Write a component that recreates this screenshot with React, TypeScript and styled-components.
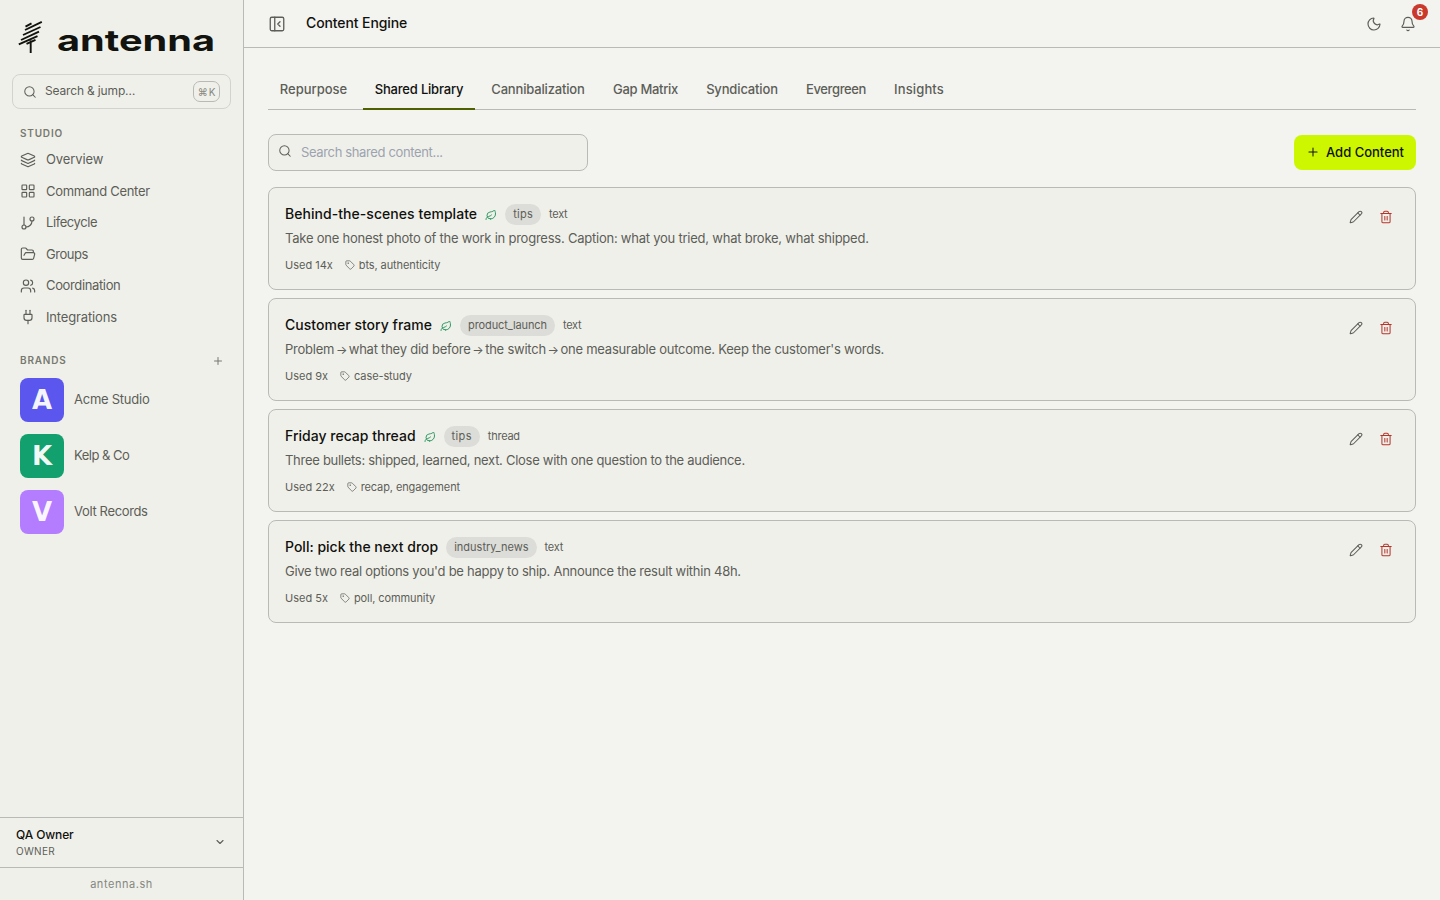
import React from "react";
import styled, { createGlobalStyle } from "styled-components";
import {
  Layers, LayoutGrid, GitBranch, FolderOpen, Users, Plug, Search, Plus, ChevronDown,
  PanelLeftClose, Moon, Bell, Leaf, Tag, Pencil, Trash2,
} from "lucide-react";

const Global = createGlobalStyle`
  *, *::before, *::after { box-sizing: border-box; }
  body { margin: 0; background: #f3f3f0; color: #10110d; font: 400 13px/1.5 Inter, "Liberation Sans", sans-serif; }
  button, input { font: inherit; color: inherit; }
  button { border: 0; padding: 0; background: none; }
  svg { flex: none; display: block; }
`;

/* Single-line label with adjustable tracking */
const Fit = styled.span<{ $ls?: number }>`
  letter-spacing: ${(p) => p.$ls ?? 0}px;
  white-space: nowrap;
`;

const Shell = styled.div`
  display: flex;
  height: 900px;
`;
const Sidebar = styled.aside`
  width: 244px;
  flex: none;
  display: flex;
  flex-direction: column;
  background: #f0f0eb;
  border-right: 1px solid #b9bab6;
`;
const Brand = styled.div`
  height: 74px;
  padding: 16px 0 0 16px;
`;
const JumpBox = styled.button`
  display: flex;
  align-items: center;
  height: 35px;
  margin: 0 12px;
  padding: 0 10px;
  gap: 8px;
  border: 1px solid #d2d3cf;
  border-radius: 8px;
  color: #5c5e57;
  text-align: left;
  font-size: 12px;
`;
const JumpLabel = styled(Fit)`
  flex: 1;
  padding-bottom: 2px;
`;
const Kbd = styled.kbd`
  height: 21px;
  width: 27px;
  display: flex;
  align-items: center;
  justify-content: center;
  gap: 1px;
  border: 1px solid #b9bab6;
  border-radius: 7px;
  font: 400 10px/1 Inter, "DejaVu Sans", sans-serif;
  color: #85877f;
  white-space: nowrap;
`;
const SectionHead = styled.div<{ $top: number; $line: number }>`
  display: flex;
  align-items: center;
  justify-content: space-between;
  height: 15px;
  margin: ${(p) => p.$top}px 19px 0 20px;
  font-size: 10px;
  line-height: ${(p) => p.$line}px;
  font-weight: 600;
  letter-spacing: 0.8px;
  color: #77796f;
`;
const NavList = styled.nav`
  display: flex;
  flex-direction: column;
  padding: 4px 20px 0;
`;
const NavItem = styled.a`
  display: flex;
  align-items: center;
  gap: 10px;
  height: 31.5px;
  color: #5c5e57;
`;
const BrandList = styled.div`
  display: flex;
  flex-direction: column;
  gap: 12px;
  padding: 10px 20px 0;
`;
const BrandRow = styled.a`
  display: flex;
  align-items: center;
  gap: 10px;
  color: #5c5e57;
`;
const Avatar = styled.span<{ $bg: string }>`
  width: 44px;
  height: 44px;
  border-radius: 8px;
  display: grid;
  place-items: center;
  background: ${(p) => p.$bg};
  color: rgba(255, 255, 255, 0.94);
  font: 700 26px/1 "DejaVu Sans", sans-serif;
`;
const Account = styled.button`
  margin-top: auto;
  height: 50px;
  border-top: 1px solid #b9bab6;
  padding: 0 17px 0 16px;
  display: flex;
  align-items: center;
  justify-content: space-between;
  text-align: left;
  color: #5c5e57;
  svg { margin-bottom: 1px; }
`;
const AccountName = styled.div`
  font-size: 12px;
  line-height: 18px;
  font-weight: 450;
  letter-spacing: -0.12px;
  color: #10110d;
`;
const AccountRole = styled.div`
  font-size: 10px;
  line-height: 15px;
  letter-spacing: 0.3px;
`;
const Footer = styled.div`
  height: 33px;
  border-top: 1px solid #b9bab6;
  display: grid;
  place-items: center;
  font-size: 11px;
  letter-spacing: 0.55px;
  color: #85877f;
`;
const Main = styled.main`
  flex: 1;
  min-width: 0;
`;
const TopBar = styled.header`
  height: 48px;
  border-bottom: 1px solid #b9bab6;
  display: flex;
  align-items: center;
  padding: 0 24px;
  color: #5c5e57;
`;
const PageTitle = styled.h1`
  margin: 0 auto 0 20px;
  padding-bottom: 1px;
  font-size: 14px;
  line-height: 20px;
  font-weight: 500;
  letter-spacing: -0.1px;
  color: #10110d;
`;
const BellWrap = styled.span`
  position: relative;
  margin-left: 18px;
`;
const Count = styled.span`
  position: absolute;
  right: -12px;
  top: -12px;
  width: 16px;
  height: 16px;
  border-radius: 50%;
  display: grid;
  place-items: center;
  background: #c93a2c;
  color: #fff;
  font-size: 10px;
  line-height: 1;
  font-weight: 700;
`;
const Content = styled.div`
  padding: 22px 24px;
`;
const Tabs = styled.div`
  display: flex;
  gap: 4px;
  height: 40px;
  border-bottom: 1px solid #b9bab6;
`;
const Tab = styled.button<{ $active?: boolean; $w: number }>`
  width: ${(p) => p.$w}px;
  height: 40px;
  padding-top: 2px;
  border-bottom: 2px solid ${(p) => (p.$active ? "#4d6100" : "transparent")};
  font-weight: 500;
  color: ${(p) => (p.$active ? "#10110d" : "#5c5e57")};
`;
const Toolbar = styled.div`
  display: flex;
  align-items: center;
  justify-content: space-between;
  margin: 24px 0 16px;
  height: 37px;
`;
const Field = styled.label`
  width: 320px;
  height: 37px;
  border: 1px solid #b9bab6;
  border-radius: 8px;
  background: #f0f0eb;
  display: flex;
  gap: 9px;
  padding: 0 9px;
  color: #5c5e57;
  svg { margin-top: 9px; }
`;
const Input = styled.input`
  flex: 1;
  border: 0;
  padding: 0;
  outline: 0;
  background: none;
  letter-spacing: -0.36px;
  &::placeholder { color: #9ca3af; opacity: 1; }
`;
const AddButton = styled.button`
  width: 122px;
  height: 35px;
  border-radius: 8px;
  background: #cdf700;
  display: flex;
  align-items: center;
  padding-left: 12px;
  gap: 6px;
  font-weight: 500;
  svg { margin-bottom: 1px; }
`;
const CardList = styled.div`
  display: flex;
  flex-direction: column;
  gap: 8px;
`;
const Card = styled.article`
  height: 103px;
  border: 1px solid #b9bab6;
  border-radius: 8px;
  background: #f0f0eb;
  padding: 16px;
  display: flex;
  justify-content: space-between;
  color: #5c5e57;
`;
const TitleRow = styled.div`
  display: flex;
  align-items: center;
  height: 21px;
  gap: 8px;
  font-size: 11px;
`;
const Title = styled.h2<{ $ls: number }>`
  margin: 0;
  padding-bottom: 2px;
  font-size: 14px;
  line-height: 19px;
  font-weight: 500;
  letter-spacing: ${(p) => p.$ls}px;
  color: #10110d;
`;
const Pill = styled.span<{ $ls: number }>`
  height: 21px;
  padding: 0 8px;
  border-radius: 11px;
  line-height: 21px;
  letter-spacing: ${(p) => p.$ls}px;
  background: #dcdcd8;
`;
const Kind = styled(Fit)`
  line-height: 17px;
`;
const Desc = styled.p<{ $ls: number }>`
  margin: 4px 0 8px;
  height: 19.5px;
  line-height: 19.5px;
  letter-spacing: ${(p) => p.$ls}px;
`;
const Arrow = styled.span`
  margin: 0 -1.8px;
  font-size: 12px;
`;
const Meta = styled.div`
  display: flex;
  align-items: center;
  gap: 12px;
  font-size: 11px;
  line-height: 16.5px;
`;
const Tags = styled.span`
  display: flex;
  align-items: center;
  gap: 4px;
  letter-spacing: -0.1px;
`;
const Actions = styled.div`
  display: flex;
  gap: 16px;
  padding: 6px 6px 0 0;
  svg:last-child { color: #b5352b; }
`;

const nav = [
  { icon: Layers, label: "Overview", ls: -0.12 },
  { icon: LayoutGrid, label: "Command Center", ls: -0.3 },
  { icon: GitBranch, label: "Lifecycle", ls: -0.42 },
  { icon: FolderOpen, label: "Groups", ls: -0.46 },
  { icon: Users, label: "Coordination", ls: -0.36 },
  { icon: Plug, label: "Integrations", ls: -0.15 },
];
const brands = [
  { letter: "A", name: "Acme Studio", bg: "#5b57ee", ls: -0.25 },
  { letter: "K", name: "Kelp & Co", bg: "#12a06e", ls: -0.5 },
  { letter: "V", name: "Volt Records", bg: "#b47dff", ls: -0.35 },
];
const tabs = [
  { label: "Repurpose", w: 91, ls: 0 },
  { label: "Shared Library", w: 112, ls: -0.2 },
  { label: "Cannibalization", w: 118, ls: -0.17 },
  { label: "Gap Matrix", w: 89, ls: -0.3 },
  { label: "Syndication", w: 96, ls: -0.15 },
  { label: "Evergreen", w: 84, ls: -0.4 },
  { label: "Insights", w: 74, ls: 0.12 },
];
const cards = [
  { title: "Behind-the-scenes template", tls: 0.05, leaf: true, pill: "tips", pls: 0.25, kind: "text", used: "Used 14x", tags: "bts, authenticity",
    desc: "Take one honest photo of the work in progress. Caption: what you tried, what broke, what shipped.", dls: -0.233 },
  { title: "Customer story frame", tls: 0.03, leaf: true, pill: "product_launch", pls: -0.11, kind: "text", used: "Used 9x", tags: "case-study",
    desc: "Problem → what they did before → the switch → one measurable outcome. Keep the customer's words.", dls: -0.23 },
  { title: "Friday recap thread", tls: 0.01, leaf: true, pill: "tips", pls: 0.35, kind: "thread", used: "Used 22x", tags: "recap, engagement",
    desc: "Three bullets: shipped, learned, next. Close with one question to the audience.", dls: -0.28 },
  { title: "Poll: pick the next drop", tls: 0, leaf: false, pill: "industry_news", pls: 0, kind: "text", used: "Used 5x", tags: "poll, community",
    desc: "Give two real options you'd be happy to ship. Announce the result within 48h.", dls: -0.26 },
];

function Logo() {
  return (
    <svg width="210" height="48" viewBox="0 -4 210 48" overflow="visible" role="img" aria-label="antenna">
      <g stroke="#12130e" strokeWidth="1.9" fill="none">
        <path d="M9.500 6.600 15.500 3.400M9 10 25.800 1.800M7 15 24.500 7M5 20 23 11.700M2.800 24.300 21.500 16.200M10.500 23.800 19.500 19.800M14.700 20.500v12.500" />
      </g>
      <text x="41" y="30.800" textLength="158" lengthAdjust="spacingAndGlyphs" fontFamily="Inter" fontWeight="650" fontSize="29.500" fill="#12130e">antenna</text>
    </svg>
  );
}

export default function App() {
  return (
    <Shell>
      <Global />
      <Sidebar>
        <Brand><Logo /></Brand>
        <JumpBox>
          <Search size={14} strokeWidth={1.75} />
          <JumpLabel $ls={-0.16}>Search &amp; jump…</JumpLabel>
          <Kbd><span>⌘</span><span>K</span></Kbd>
        </JumpBox>
        <SectionHead $top={16} $line={16}>STUDIO</SectionHead>
        <NavList>
          {nav.map(({ icon: Icon, label, ls }) => (
            <NavItem key={label}><Icon size={16} strokeWidth={1.75} /><Fit $ls={ls}>{label}</Fit></NavItem>
          ))}
        </NavList>
        <SectionHead $top={20} $line={15}>BRANDS<Plus size={12} strokeWidth={2} /></SectionHead>
        <BrandList>
          {brands.map((b) => (
            <BrandRow key={b.name}><Avatar $bg={b.bg}>{b.letter}</Avatar><Fit $ls={b.ls}>{b.name}</Fit></BrandRow>
          ))}
        </BrandList>
        <Account>
          <div>
            <AccountName>QA Owner</AccountName>
            <AccountRole>OWNER</AccountRole>
          </div>
          <ChevronDown size={12} strokeWidth={2.25} />
        </Account>
        <Footer>antenna.sh</Footer>
      </Sidebar>
      <Main>
        <TopBar>
          <PanelLeftClose size={18} strokeWidth={1.75} />
          <PageTitle>Content Engine</PageTitle>
          <Moon size={16} strokeWidth={1.75} />
          <BellWrap><Bell size={16} strokeWidth={1.75} /><Count>6</Count></BellWrap>
        </TopBar>
        <Content>
          <Tabs>
            {tabs.map((t, i) => (
              <Tab key={t.label} $active={i === 1} $w={t.w}><Fit $ls={t.ls}>{t.label}</Fit></Tab>
            ))}
          </Tabs>
          <Toolbar>
            <Field><Search size={14} strokeWidth={1.75} /><Input placeholder="Search shared content..." /></Field>
            <AddButton><Plus size={14} strokeWidth={1.75} /><Fit>Add Content</Fit></AddButton>
          </Toolbar>
          <CardList>
            {cards.map((c) => (
              <Card key={c.title}>
                <div>
                  <TitleRow>
                    <Title $ls={c.tls}>{c.title}</Title>
                    {c.leaf && <Leaf size={12} color="#2f9a63" />}
                    <Pill $ls={c.pls}>{c.pill}</Pill>
                    <Kind $ls={-0.25}>{c.kind}</Kind>
                  </TitleRow>
                  <Desc $ls={c.dls}>
                    {c.desc.split("→").map((part, i) => (
                      <React.Fragment key={i}>{i > 0 && <Arrow>→</Arrow>}{part}</React.Fragment>
                    ))}
                  </Desc>
                  <Meta>
                    <span>{c.used}</span>
                    <Tags><Tag size={10} strokeWidth={1.75} />{c.tags}</Tags>
                  </Meta>
                </div>
                <Actions><Pencil size={14} strokeWidth={1.75} /><Trash2 size={14} strokeWidth={1.75} /></Actions>
              </Card>
            ))}
          </CardList>
        </Content>
      </Main>
    </Shell>
  );
}
